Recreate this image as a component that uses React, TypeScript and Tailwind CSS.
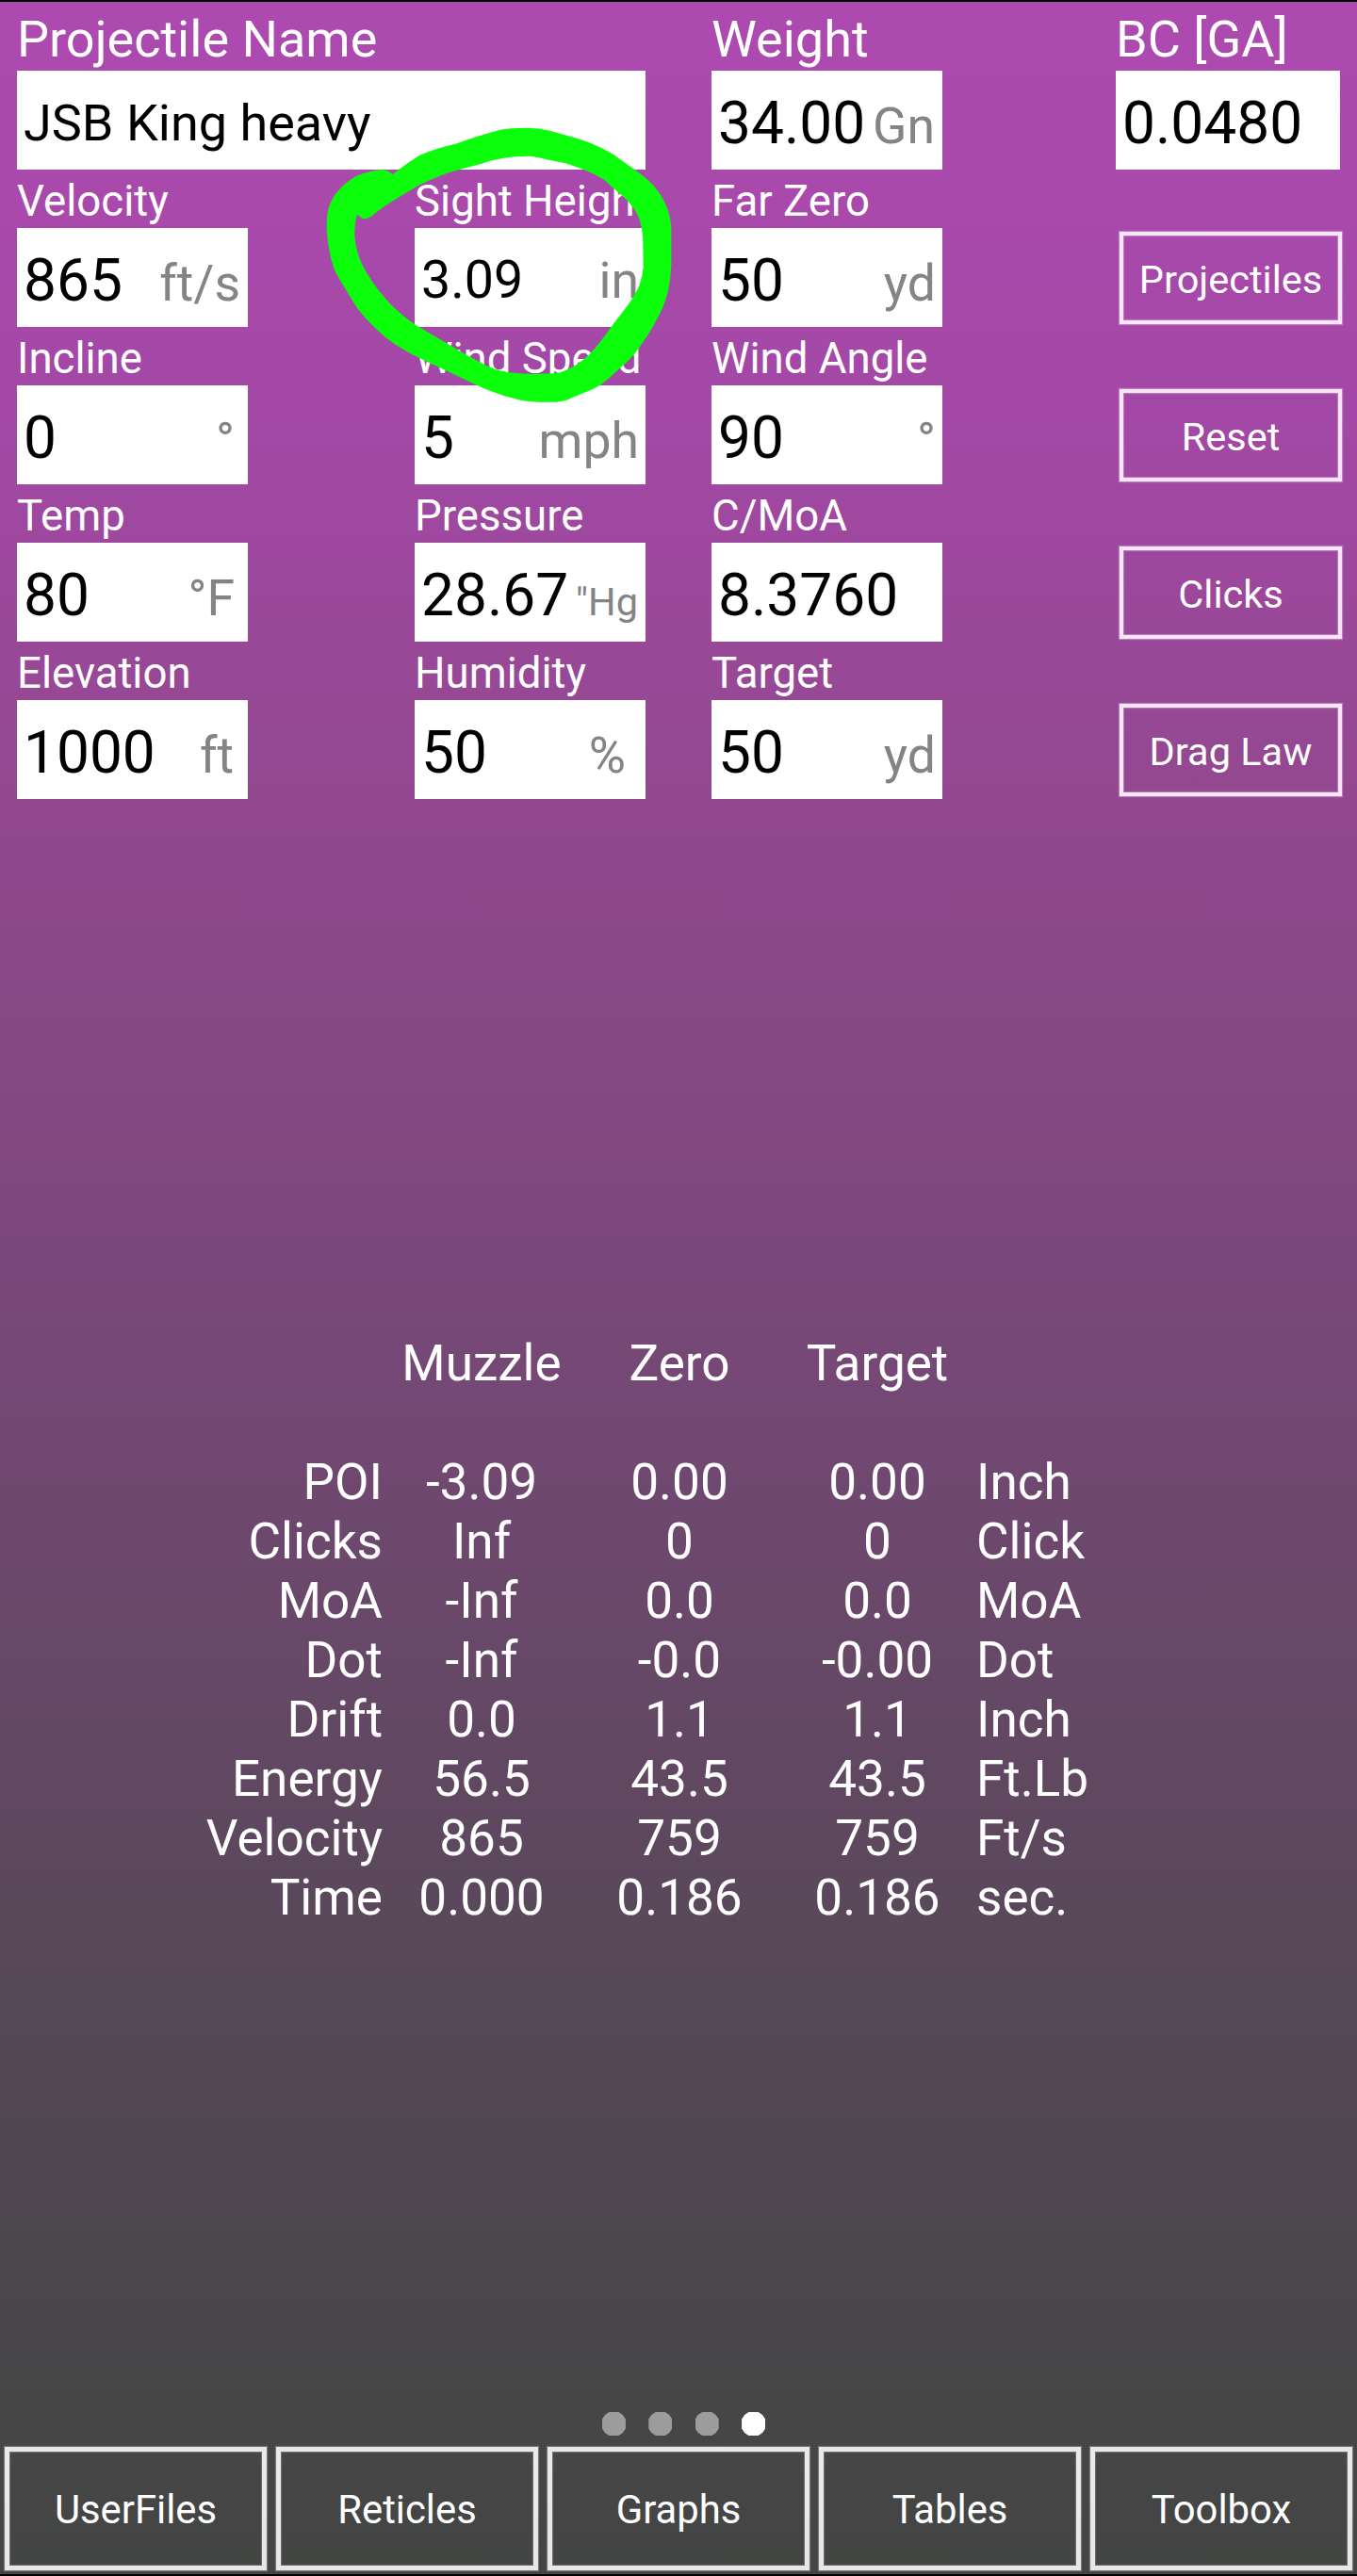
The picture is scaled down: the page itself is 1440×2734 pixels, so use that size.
import React from 'react';
import clsx from 'clsx';

interface FieldProps {
  label: string;
  value: string;
  unit?: string;
  large?: boolean;
  className?: string;
  rowClass?: string;
  valueClass?: string;
  unitClass?: string;
}

const Field: React.FC<FieldProps> = ({
  label,
  value,
  unit,
  large = false,
  className = 'w-[245px]',
  rowClass = 'leading-[112px]',
  valueClass = 'text-[62.2px]',
  unitClass = 'text-[53.5px] pr-[7px]'
}) => (
  <div className={clsx('flex h-[167px] flex-col', className)}>
    <div
      className={clsx(
        'h-[62px] whitespace-nowrap text-white',
        large ? 'text-[54px] leading-[58px]' : 'text-[45.6px] leading-[67px]'
      )}
    >
      {label}
    </div>
    <div className={clsx('flex h-[105px] items-baseline justify-between bg-white pl-[7px]', rowClass)}>
      <span className={clsx('text-black', valueClass)}>{value}</span>
      {unit && <span className={clsx('text-[#848484]', unitClass)}>{unit}</span>}
    </div>
  </div>
);

const SideButton: React.FC<{ label: string }> = ({ label }) => (
  <div className="h-[167px] pt-[66px] pl-1">
    <button className="flex h-[98px] w-[236px] items-center justify-center border-4 border-[#f8e6f8] pt-[5px] text-[41.5px] text-white shadow-[0_0_1px_1px_rgba(255,255,255,0.3),inset_0_0_1px_1px_rgba(255,255,255,0.3)]">
      {label}
    </button>
  </div>
);

const results = [
  ['POI', '-3.09', '0.00', '0.00', 'Inch'],
  ['Clicks', 'Inf', '0', '0', 'Click'],
  ['MoA', '-Inf', '0.0', '0.0', 'MoA'],
  ['Dot', '-Inf', '-0.0', '-0.00', 'Dot'],
  ['Drift', '0.0', '1.1', '1.1', 'Inch'],
  ['Energy', '56.5', '43.5', '43.5', 'Ft.Lb'],
  ['Velocity', '865', '759', '759', 'Ft/s'],
  ['Time', '0.000', '0.186', '0.186', 'sec.']
];

const tabs = ['UserFiles', 'Reticles', 'Graphs', 'Tables', 'Toolbox'];

const resultRow = 'grid h-[63px] grid-cols-[405px_210px_210px_210px_1fr] items-center';

// Freehand ring drawn around the sight height field
const Highlight = () => (
  <svg
    className="pointer-events-none absolute top-[108px] left-[330px] h-[330px] w-[400px]"
    viewBox="0 0 1200 990"
    fill="#0bff0b"
    fillRule="evenodd"
  >
    <path d="M225 210Q245 211 260 225Q300 193 345 165Q395 142 460 128Q530 103 600 84Q640 76 690 77Q725 77 760 86L830 106Q900 125 960 160L1030 210Q1066 235 1090 260Q1115 290 1125 312Q1147 360 1147 400V510Q1145 560 1138 590Q1130 630 1110 670Q1090 710 1070 740Q1050 770 1030 797Q1005 825 980 845Q950 875 920 897Q895 912 870 920L830 937Q805 950 780 950H725Q680 950 640 937Q610 930 580 918Q545 905 510 888L420 845L340 808Q305 790 270 768Q240 748 210 720Q175 688 150 655Q130 625 110 590Q90 560 75 530Q60 490 55 450Q50 410 50 390Q50 350 57 330Q67 300 85 280Q105 255 125 243Q145 228 165 223Q195 212 225 210ZM147 352Q158 367 172 367Q183 366 195 357Q210 344 230 329L280 298L340 262Q370 246 400 235Q430 221 470 211L540 192Q575 180 610 174Q650 167 700 167Q725 170 750 178L810 190Q840 200 870 211Q902 224 930 240L980 284Q1005 303 1025 330Q1045 358 1050 385Q1057 410 1057 450L1058 520Q1056 550 1045 580Q1034 605 1010 640L960 705Q935 742 905 778Q880 808 850 828Q820 848 790 857Q750 860 700 860Q650 860 610 852Q585 847 560 835L490 797L430 762L330 703Q300 682 270 655Q243 630 220 600Q195 570 175 535Q160 510 150 480Q139 440 139 415Q139 380 147 352Z" />
  </svg>
);

export default function App() {
  return (
    <div className="relative flex h-[2734px] w-[1440px] flex-col border-y-2 border-black bg-[linear-gradient(to_bottom,#ad4ab0_0%,#a348a6_16%,#92488f_31%,#784878_51%,#5a485b_74%,#464647_93%,#434543_100%)] font-[Roboto,sans-serif]">
      <div className="grid grid-cols-[422px_315px_429px_1fr] pt-[11px] pl-[18px]">
        <Field
          label="Projectile Name"
          value="JSB King heavy"
          large
          className="col-span-2 w-[667px]"
          rowClass="leading-[111px]"
          valueClass="text-[54px]"
        />
        <Field label="Weight" value="34.00" unit="Gn" large unitClass="text-[53.5px] pr-2" />
        <Field label="BC [GA]" value="0.0480" large className="w-[238px]" />

        <Field label="Velocity" value="865" unit="ft/s" unitClass="text-[53.5px] pr-2" />
        <Field
          label="Sight Height"
          value="3.09"
          unit="in"
          rowClass="leading-[112px]"
          valueClass="text-[55.5px]"
        />
        <Field label="Far Zero" value="50" unit="yd" />
        <SideButton label="Projectiles" />

        <Field label="Incline" value="0" unit="°" unitClass="text-[53.5px] pr-[14px]" />
        <Field label="Wind Speed" value="5" unit="mph" />
        <Field label="Wind Angle" value="90" unit="°" />
        <SideButton label="Reset" />

        <Field label="Temp" value="80" unit="°F" unitClass="text-[53.5px] pr-[14px]" />
        <Field label="Pressure" value="28.67" unit={'"Hg'} unitClass="text-[41.5px] pr-2" />
        <Field label="C/MoA" value="8.3760" />
        <SideButton label="Clicks" />

        <Field label="Elevation" value="1000" unit="ft" unitClass="text-[53.5px] pr-[15px]" />
        <Field label="Humidity" value="50" unit="%" unitClass="text-[53.5px] pr-[21px]" />
        <Field label="Target" value="50" unit="yd" />
        <SideButton label="Drag Law" />
      </div>

      <div className="mt-[568px] pl-px text-[53.1px] leading-[63px] text-white">
        <div className={resultRow}>
          <span />
          <span className="text-center">Muzzle</span>
          <span className="text-center">Zero</span>
          <span className="text-center">Target</span>
        </div>
        <div className="h-[63px]" />
        {results.map(([name, muzzle, zero, target, unit]) => (
          <div key={name} className={resultRow}>
            <span className="text-right">{name}</span>
            <span className="text-center">{muzzle}</span>
            <span className="text-center">{zero}</span>
            <span className="text-center">{target}</span>
            <span>{unit}</span>
          </div>
        ))}
      </div>

      <div className="mt-auto flex justify-center gap-[24.4px] pb-3 pl-[11px]">
        {[0, 1, 2, 3].map((page) => (
          <span
            key={page}
            className={clsx(
              'size-[25px] [clip-path:polygon(30%_0,70%_0,88%_12%,100%_30%,100%_70%,88%_88%,70%_100%,30%_100%,12%_88%,0_70%,0_30%,12%_12%)]',
              page === 3 ? 'bg-white' : 'bg-[#9c9c9c]'
            )}
          />
        ))}
      </div>

      <div className="flex h-[135px] gap-[10px] px-[5px] pb-1">
        {tabs.map((tab) => (
          <button
            key={tab}
            className="flex-1 border-[5px] border-[#e8e8e8] pt-[3px] text-[41.8px] text-white shadow-[0_0_1px_1px_rgba(255,255,255,0.25),inset_0_0_1px_1px_rgba(255,255,255,0.25)]"
          >
            {tab}
          </button>
        ))}
      </div>

      <Highlight />
    </div>
  );
}
